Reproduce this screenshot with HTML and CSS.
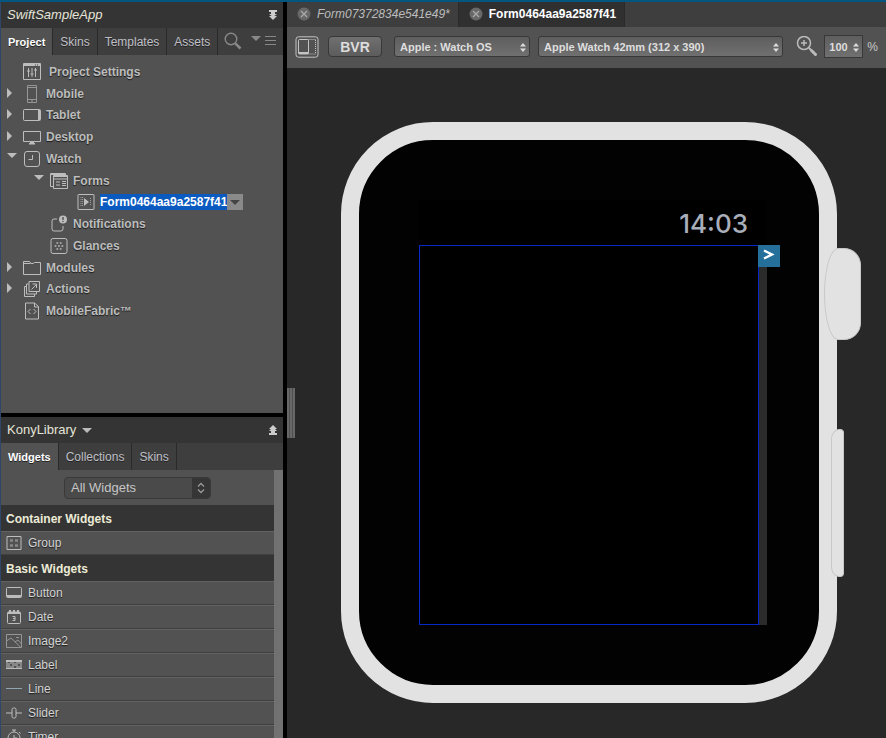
FILE: index.html
```html
<!DOCTYPE html>
<html lang="en">
<head>
<meta charset="utf-8">
<title>SwiftSampleApp</title>
<link rel="stylesheet" href="styles.css">
</head>
<body>
<div class="app">
  <aside class="sidebar">
    <section class="panel panel-project">
      <header class="panel-header">
        <h1 class="app-name">SwiftSampleApp</h1>
        <button class="icon-button" aria-label="Collapse"><svg width="10" height="12" viewBox="0 0 10 12"><path fill="#ccc" d="M1 1h8v2H7v2h2L5 8 1 5h2V3H1zM1 7h8l-4 4z"/></svg></button>
      </header>
      <nav class="tabs">
        <button class="tab active">Project</button>
        <button class="tab">Skins</button>
        <button class="tab">Templates</button>
        <button class="tab">Assets</button>
        <div class="tab-tools">
          <button class="icon-button" aria-label="Search"><svg width="18" height="18" viewBox="0 0 18 18" fill="none" stroke="#888"><circle cx="7" cy="7" r="5.8" stroke-width="1.4"/><path d="M11.3 11.3l5.2 5.2" stroke-width="2.6"/></svg></button>
          <button class="icon-button" aria-label="Menu"><svg width="26" height="12" viewBox="0 0 26 12"><path fill="#888" d="M0 1h10L5 6zM14 1h11v1H14zM14 5h11v1H14zM14 9h11v1H14z"/></svg></button>
        </div>
      </nav>
      <ul class="tree">
        <li class="node level-1"><span class="twisty"></span>
          <svg class="icon" width="18" height="17" viewBox="0 0 18 17"><path d="M.5.5h17v16H.5zM5.500 5v9M9 5v9M12.500 5v9M4 8h3M7.500 11h3M11 7h3"/><path class="solid" d="M1 1h16v2H1z"/><path stroke="#444" d="M12 2h1M14 2h1"/></svg>
          <span class="name wide">Project Settings</span></li>
        <li class="node level-1"><span class="twisty closed"></span>
          <svg class="icon dim" width="18" height="18" viewBox="0 0 18 18"><path d="M4.500.5h9v17h-9zM4.500 2.500h9M4.500 14.500h9M8 16h2"/></svg>
          <span class="name">Mobile</span></li>
        <li class="node level-1"><span class="twisty closed"></span>
          <svg class="icon" width="18" height="18" viewBox="0 0 18 18"><rect x=".5" y="3.500" width="17" height="11" rx="1"/><path class="solid" d="M15 4h2v10h-2z"/></svg>
          <span class="name">Tablet</span></li>
        <li class="node level-1"><span class="twisty closed"></span>
          <svg class="icon" width="18" height="18" viewBox="0 0 18 18"><path d="M.5 3.500h17v10H.5z"/><path class="solid" d="M7 14h4v1H7zM6 15h6v1.500H6z"/></svg>
          <span class="name">Desktop</span></li>
        <li class="node level-1"><span class="twisty open"></span>
          <svg class="icon" width="18" height="18" viewBox="0 0 18 18"><rect x="1.500" y="1.500" width="15" height="15" rx="2.500"/><path d="M9.500 5v4.500H5.500"/></svg>
          <span class="name">Watch</span></li>
        <li class="node level-2"><span class="twisty open"></span>
          <svg class="icon" width="18" height="18" viewBox="0 0 18 18"><path d="M3.500 3.500h14v13h-14zM3.500 7h14M6 10h4M6 13h4M12 9.500h4M12 11.500h4M12 13.500h4M3 14.500H.5V1.500h15V3"/><path class="solid" d="M1 2h14v1H1zM4 4h13v1H4z"/></svg>
          <span class="name">Forms</span></li>
        <li class="node level-3 selected"><span class="twisty"></span>
          <svg class="icon" width="18" height="18" viewBox="0 0 18 18"><rect x="1" y="1.500" width="16" height="15" rx=".5"/><path stroke-width=".7" stroke-dasharray="1 1" d="M4 4v10M5.500 4v10M13.500 5v8"/><path class="solid" d="M7 5l5 4-5 4z"/></svg>
          <span class="name">Form0464aa9a2587f41</span><button class="node-menu" aria-label="Form actions"></button></li>
        <li class="node level-2"><span class="twisty"></span>
          <svg class="icon" width="18" height="18" viewBox="0 0 18 18"><path d="M7 4H4Q2 4 2 6v8q0 2 2 2h7q2 0 2-2v-3"/><circle class="solid" cx="13" cy="4.500" r="4"/><path stroke="#505050" stroke-width="1.400" d="M13 2v3M13 6v1"/></svg>
          <span class="name">Notifications</span></li>
        <li class="node level-2"><span class="twisty"></span>
          <svg class="icon" width="18" height="18" viewBox="0 0 18 18"><rect x="1" y="1.500" width="16" height="15" rx="2"/><path stroke-width="1.700" stroke-dasharray="1.700 1.700" d="M6.500 6h5M4.700 9h8.600M6.500 12h5"/></svg>
          <span class="name">Glances</span></li>
        <li class="node level-1"><span class="twisty closed"></span>
          <svg class="icon" width="18" height="18" viewBox="0 0 18 18"><path d="M.5 15.500V2.500h6l1.500 2h2l1.500-1h6v12zM.5 4.500h7"/></svg>
          <span class="name">Modules</span></li>
        <li class="node level-1"><span class="twisty closed"></span>
          <svg class="icon" width="18" height="18" viewBox="0 0 18 18"><path d="M6 1.500h10.500v10H6zM5.500 4H3.500v10h10v-2.500M3.500 6.500h-2v10h10V14M8.500 9.500l5-5M9.500 4h4v4"/></svg>
          <span class="name">Actions</span></li>
        <li class="node level-1"><span class="twisty"></span>
          <svg class="icon" width="18" height="18" viewBox="0 0 18 18"><path d="M2.500 1h9l4 3.500V17h-13zM11.500 1v4h4M7.500 7L5 9.500 7.500 12M10.500 7L13 9.500 10.500 12"/></svg>
          <span class="name">MobileFabric™</span></li>
      </ul>
    </section>

    <section class="panel panel-library">
      <header class="panel-header">
        <button class="library-name">KonyLibrary <span class="arrow-down"></span></button>
        <button class="icon-button" aria-label="Expand"><svg width="10" height="12" viewBox="0 0 10 12"><path fill="#ccc" d="M1 11h8V9H7V7h2L7 5h2L5 1 1 5h2L1 7h2v2H1z"/></svg></button>
      </header>
      <nav class="tabs">
        <button class="tab active">Widgets</button>
        <button class="tab">Collections</button>
        <button class="tab">Skins</button>
      </nav>
      <div class="library-body">
        <div class="filter">
          <div class="select-box filter-box">
            <select class="filter-select" aria-label="Widget filter"><option>All Widgets</option></select>
            <span class="stepper"><svg width="8" height="12" viewBox="0 0 8 12" fill="none" stroke="#999" stroke-width="1.300"><path d="M1 4.500l3-3 3 3M1 7.500l3 3 3-3"/></svg></span>
          </div>
        </div>
        <h2 class="group-title">Container Widgets</h2>
        <ul class="widgets">
          <li class="widget"><svg class="icon" width="16" height="16" viewBox="0 0 16 16"><path d="M1 1.500h14v13H1z"/><path stroke-width="2.500" stroke="#888" d="M4 5.500h3M9 5.500h3M4 10.500h3M9 10.500h3"/></svg>Group</li>
        </ul>
        <h2 class="group-title">Basic Widgets</h2>
        <ul class="widgets">
          <li class="widget"><svg class="icon" width="16" height="16" viewBox="0 0 16 16"><rect x=".5" y="2.500" width="15" height="10" rx="1"/><path class="solid" d="M1 10h14v2H1z"/></svg>Button</li>
          <li class="widget"><svg class="icon" width="16" height="16" viewBox="0 0 16 16"><rect x="1.500" y="3" width="13" height="11.500" rx="1"/><path class="solid" d="M2 3h12v2H2zM3 1h2v3H3zM7 1h2v3H7zM11 1h2v3h-2z"/><path d="M6.500 7.500H9v4H6.500M7 9.500h2"/></svg>Date</li>
          <li class="widget"><svg class="icon dim" width="16" height="16" viewBox="0 0 16 16"><path d="M.5 1.500v13h15v-13zM.5 8L5 5l10 9.500M9 9l3-2 3.500 4M10 4.500h3"/></svg>Image2</li>
          <li class="widget"><svg class="icon" width="16" height="16" viewBox="0 0 16 16"><path class="solid" d="M0 3h16v2H0zM0 11h16v1H0z"/><path d="M1 5v6M3 6v5M5 5v2M5 9v2M7 5v6M9 6v3M11 5v6M13 5v2M13 9v2M15 5v6"/></svg>Label</li>
          <li class="widget"><svg class="icon" width="16" height="16" viewBox="0 0 16 16"><path stroke="#8fa6b0" d="M0 7.500h16"/></svg>Line</li>
          <li class="widget"><svg class="icon" width="16" height="16" viewBox="0 0 16 16"><path d="M0 8h6M10 8h6"/><rect x="6" y="3" width="4" height="10" rx="1.500"/></svg>Slider</li>
          <li class="widget"><svg class="icon" width="16" height="16" viewBox="0 0 16 16"><circle cx="8" cy="9" r="6"/><path d="M8 1v2M6 1h4M13 3l1.500 1.500M8 9h3M8 6v3"/></svg>Timer</li>
        </ul>
      </div>
    </section>
  </aside>

  <main class="editor">
    <nav class="file-tabs">
      <div class="file-tab"><button class="close" aria-label="Close tab"><svg width="14" height="14" viewBox="0 0 14 14"><circle cx="7" cy="7" r="6.500" fill="#686868"/><path stroke="#aaa" stroke-width="1.300" d="M4 4l6 6M10 4l-6 6"/></svg></button><a class="file-name modified">Form07372834e541e49*</a></div>
      <div class="file-tab current"><button class="close" aria-label="Close tab"><svg width="14" height="14" viewBox="0 0 14 14"><circle cx="7" cy="7" r="6.500" fill="#686868"/><path stroke="#aaa" stroke-width="1.300" d="M4 4l6 6M10 4l-6 6"/></svg></button><a class="file-name">Form0464aa9a2587f41</a></div>
    </nav>
    <div class="toolbar">
      <button class="icon-button" aria-label="Split view"><svg width="24" height="22" viewBox="0 0 24 22" fill="none" stroke="#c4c4c4"><rect x="1" y=".8" width="22" height="20.400" rx="2.500"/><rect x="3.500" y="3.500" width="10" height="14.500" rx="1"/><path d="M13.500 3.500h7M20.500 4v14M13.500 18h7" stroke-dasharray="1 1"/><path stroke-width="2" d="M4 17h9"/></svg></button>
      <button class="bvr">BVR</button>
      <div class="select-box platform-box">
        <select class="device-select" aria-label="Platform"><option>Apple : Watch OS</option></select>
        <svg class="carets" width="6" height="9" viewBox="0 0 6 9"><path fill="#ddd" d="M0 3.500L3 0l3 3.500zM0 5.500h6L3 9z"/></svg>
      </div>
      <div class="select-box device-box">
        <select class="device-select" aria-label="Device"><option>Apple Watch 42mm (312 x 390)</option></select>
        <svg class="carets" width="6" height="9" viewBox="0 0 6 9"><path fill="#ddd" d="M0 3.500L3 0l3 3.500zM0 5.500h6L3 9z"/></svg>
      </div>
      <button class="icon-button zoom" aria-label="Zoom in"><svg width="22" height="22" viewBox="0 0 22 22" fill="none" stroke="#bbb"><circle cx="8" cy="7" r="6.500" stroke-width="1.500"/><path stroke-width="1.500" d="M5 7h6M8 4v6"/><path d="M13 12l2 2" stroke-width="2"/><path stroke-linecap="round" d="M15.500 14.500l4 4" stroke-width="3"/></svg></button>
      <div class="select-box scale-box">
        <select class="device-select scale-select" id="scale" aria-label="Scale"><option>100</option></select>
        <svg class="carets" width="6" height="9" viewBox="0 0 6 9"><path fill="#ddd" d="M0 3.500L3 0l3 3.500zM0 5.500h6L3 9z"/></svg>
      </div>
      <label class="percent" for="scale">%</label>
    </div>
    <div class="canvas">
      <div class="splitter"></div>
      <div class="watch">
        <div class="crown"></div>
        <div class="side-button"></div>
        <div class="screen">
          <div class="clock">14:03</div>
          <div class="form-row">
            <div class="form-area"></div>
            <div class="form-scroll"></div>
            <button class="form-next" aria-label="Next"><svg width="12" height="12" viewBox="0 0 12 12" fill="none" stroke="#fff" stroke-width="2.400"><path d="M1 1.500L9 5.500 1 9.500"/></svg></button>
          </div>
        </div>
      </div>
    </div>
  </main>
</div>
</body>
</html>
```
FILE: styles.css
```css
* {
  box-sizing: border-box;
}

body {
  margin: 0;
  background: #000;
  color: #c8c8c8;
  font: 12px/16px "Liberation Sans", Arial, sans-serif;
}

button,
select {
  margin: 0;
  padding: 0;
  border: 0;
  background: none;
  color: inherit;
  font: inherit;
  text-shadow: inherit;
  appearance: none;
}

ul,
h1,
h2 {
  margin: 0;
  padding: 0;
  list-style: none;
}

svg {
  display: block;
}

.app {
  display: flex;
  gap: 4px;
  height: 100vh;
  border-top: 2px solid #045680;
  overflow: hidden;
}

/* Sidebar */
.sidebar {
  display: flex;
  flex: 0 0 283px;
  flex-direction: column;
  gap: 4px;
  border-left: 1px solid #304669;
}

.panel {
  display: flex;
  flex-direction: column;
  min-height: 0;
  background: #525252;
  overflow: hidden;
}

.panel-project {
  flex: 411 0 0;
}

.panel-library {
  flex: 321 0 0;
}

.panel-header {
  display: flex;
  flex: 0 0 26px;
  align-items: center;
  justify-content: space-between;
  padding: 0 5px 0 6px;
  background: #343434;
}

.app-name {
  color: #e4e4d8;
  font-size: 13px;
  font-style: italic;
  font-weight: normal;
}

.library-name {
  display: flex;
  align-items: center;
  gap: 6px;
  color: #e4e4d8;
  font-size: 13px;
}

.arrow-down {
  border: 5px solid transparent;
  border-top-color: #bbb;
  border-bottom: 0;
}

.tabs {
  display: flex;
  flex: 0 0 27px;
  background: #3e3e3e;
}

.tab {
  padding: 0 7px;
  border-right: 1px solid #2a2a2a;
  color: #c0c0c8;
  text-shadow: 0 1px 0 #222;
}

.tab.active {
  background: #525252;
  color: #fff;
  font-size: 11px;
  font-weight: bold;
}

.tab-tools {
  display: flex;
  flex: 1;
  align-items: center;
  justify-content: space-between;
  padding: 0 6px 2px;
}

/* Project tree */
.tree {
  display: grid;
  flex: 0 0 261px;
  grid-template-rows: repeat(12, 1fr);
  margin-top: 6px;
}

.node {
  display: flex;
  align-items: center;
  color: #bdbdbd;
  font-weight: bold;
  text-shadow: 0 1px 1px #1c1c1c;
}

.level-1 {
  padding-left: 6px;
}

.level-2 {
  padding-left: 33px;
}

.level-3 {
  padding-left: 60px;
}

.twisty {
  flex: 0 0 16px;
  height: 12px;
}

.twisty::before {
  display: block;
  width: 0;
  height: 0;
  border: 5px solid transparent;
}

.twisty.closed::before {
  border-left-color: #bdbdbd;
  border-right: 0;
  content: "";
}

.twisty.open::before {
  border-top-color: #bdbdbd;
  border-bottom: 0;
  content: "";
}

.icon {
  flex: none;
  fill: none;
  stroke: #bdbdbd;
}

.icon.dim {
  stroke: #969696;
}

.icon .solid {
  fill: #bdbdbd;
  stroke: none;
}

.name {
  margin-left: 5px;
}

.name.wide {
  margin-left: 8px;
}

.selected .name {
  background: #0a5ac0;
  color: #fff;
  text-shadow: none;
}

.node-menu {
  display: flex;
  align-items: center;
  justify-content: center;
  width: 16px;
  height: 16px;
  background: #8a8a8a;
}

.node-menu::before {
  border: 5px solid transparent;
  border-top-color: #444;
  border-bottom: 0;
  content: "";
}

/* Widget library */
.library-body {
  border-right: 9px solid #717171;
}

.filter {
  display: flex;
  justify-content: center;
  height: 35px;
  padding-top: 7px;
}

.select-box {
  position: relative;
  display: flex;
}

.filter-box {
  width: 147px;
  height: 22px;
  border: 1px solid #3a3a3a;
  border-radius: 4px;
  background: #4a4a4a;
  overflow: hidden;
}

.filter-select {
  flex: 1;
  padding-left: 6px;
  color: #c6c6c6;
  font-size: 13px;
}

.stepper {
  display: flex;
  flex: 0 0 18px;
  align-items: center;
  justify-content: center;
  background: #363636;
}

.group-title {
  height: 26px;
  padding-left: 5px;
  background: #343434;
  color: #ecebd6;
  font-size: 12px;
  line-height: 28px;
}

.widget {
  display: flex;
  align-items: center;
  gap: 6px;
  height: 24px;
  padding-left: 5px;
  border-top: 1px solid #626262;
  border-bottom: 1px solid #404040;
  color: #d4d4d4;
  line-height: 18px;
  text-shadow: 0 1px 1px #1c1c1c;
}

/* Editor */
.editor {
  display: flex;
  flex: 1;
  flex-direction: column;
  min-width: 0;
}

.file-tabs {
  display: flex;
  flex: 0 0 25px;
  background: #3e3e3e;
}

.file-tab {
  display: flex;
  align-items: center;
  gap: 6px;
  padding: 0 8px 2px 10px;
  border-right: 1px solid #2a2a2a;
}

.file-tab.current {
  background: #303030;
  color: #fff;
  font-weight: bold;
}

.modified {
  color: #bcbcbc;
  font-style: italic;
}

.toolbar {
  display: flex;
  flex: 0 0 41px;
  align-items: center;
  padding: 0 8px 2px;
  background: #525252;
}

.bvr {
  width: 54px;
  height: 21px;
  margin: 0 12px 0 9px;
  border: 1px solid #383838;
  border-radius: 4px;
  background: linear-gradient(#707070, #5c5c5c);
  color: #ddd;
  font-size: 14px;
  font-weight: bold;
}

.platform-box {
  flex: 0 1 136px;
  height: 21px;
  margin-right: 8px;
}

.device-box {
  flex: 1 1 244px;
  height: 21px;
  margin-right: 13px;
}

.device-select {
  width: 100%;
  padding: 0 16px 0 5px;
  border: 1px solid #383838;
  border-radius: 3px;
  background: linear-gradient(#5e5e5e, #707070);
  color: #dedede;
  font-size: 11px;
  font-weight: bold;
}

.carets {
  position: absolute;
  top: 7px;
  right: 4px;
  pointer-events: none;
}

.zoom {
  margin-right: 6px;
}

.scale-box {
  flex: 0 0 39px;
  height: 23px;
}

.scale-select {
  padding: 0 0 0 4px;
  border-radius: 0;
}

.scale-box .carets {
  top: 8px;
}

.percent {
  margin-left: 4px;
}

.canvas {
  position: relative;
  display: flex;
  flex: 1;
  align-items: flex-start;
  justify-content: center;
  min-height: 0;
  padding: 54px 0 0 5px;
  background: #282828;
  overflow: hidden;
}

.splitter {
  position: absolute;
  top: 320px;
  left: 0;
  width: 8px;
  height: 50px;
  background: repeating-linear-gradient(90deg, #686868 0 2px, #505050 2px 3px);
}

/* Device preview */
.watch {
  position: relative;
  flex: none;
  width: 496px;
  padding: 60px 52px 60px 60px;
  border: 18px solid #e2e2e2;
  border-radius: 92px;
  background: #020202;
}

.crown {
  position: absolute;
  top: 108px;
  right: -42px;
  width: 37px;
  height: 92px;
  border: 1px solid #c8c8c8;
  border-radius: 14px 17px 17px 14px / 46px 17px 17px 46px;
  background: #e2e2e2;
}

.side-button {
  position: absolute;
  top: 289px;
  right: -25px;
  width: 13px;
  height: 148px;
  border: 1px solid #c8c8c8;
  border-radius: 8px 4px 4px 8px / 10px 4px 4px 10px;
  background: #e2e2e2;
}

.screen {
  background: #000;
}

.clock {
  height: 45px;
  padding: 0 19px 0 0;
  color: #a9aebb;
  font: 500 26px/48px Inter, Roboto, sans-serif;
  text-align: right;
}

.form-row {
  position: relative;
  display: flex;
}

.form-area {
  flex: 1;
  height: 380px;
  border: 1px solid #0629c4;
}

.form-scroll {
  flex: 0 0 8px;
  background: #2b2b2b;
}

.form-next {
  position: absolute;
  top: 0;
  right: -13px;
  display: flex;
  justify-content: center;
  width: 22px;
  height: 22px;
  padding-top: 4px;
  background: #256f9b;
}
```
